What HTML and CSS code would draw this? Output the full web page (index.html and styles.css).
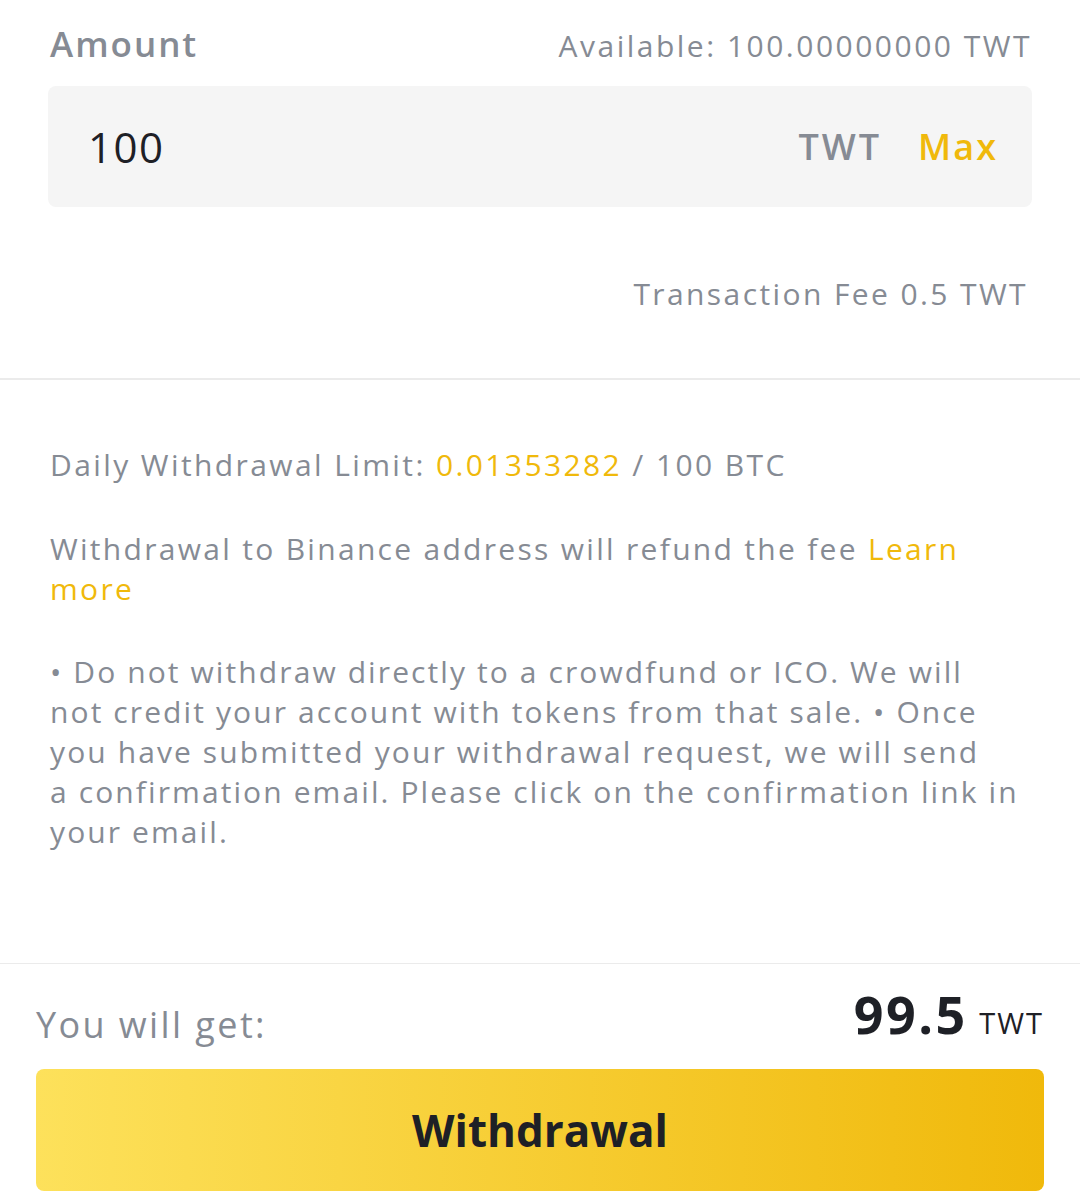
FILE: index.html
```html
<!DOCTYPE html>
<html lang="en">
<head>
    <meta charset="UTF-8">
    <meta name="viewport" content="width=device-width, initial-scale=1.0">
    <title>Withdraw TWT</title>
    <link rel="stylesheet" href="styles.css">
</head>
<body>
    <div class="form">
        <div class="amount-head">
            <span class="label">Amount</span>
            <span class="available">Available: 100.00000000 TWT</span>
        </div>
        <div class="amount-box">
            <span class="value">100</span>
            <span class="unit">TWT</span>
            <span class="max">Max</span>
        </div>
        <div class="fee">Transaction Fee <span class="num">0.5 TWT</span></div>
    </div>
    <div class="notes">
        <p class="limit">Daily Withdrawal Limit: <span class="gold">0.01353282</span> / 100 BTC</p>
        <p class="refund">Withdrawal to Binance address will refund the fee <span class="gold">Learn</span> <span class="gold">more</span></p>
        <p class="warn">• Do not withdraw directly to a crowdfund or ICO. We will<br>
            not credit your account with tokens from that sale. • Once<br>
            you have submitted your withdrawal request, we will send<br>
            a confirmation email. Please click on the confirmation link in<br>
            your email.</p>
    </div>
    <div class="footer">
        <div class="receive">
            <span class="receive-label">You will get:</span>
            <span class="receive-value"><b>99.5</b> TWT</span>
        </div>
        <button class="submit">Withdrawal</button>
    </div>
</body>
</html>
```

FILE: styles.css
```css
body {
    margin: 0;
    font-family: "Open Sans", sans-serif;
    color: #868b94;
    background: #fff;
}
.form {
    padding: 20px 48px 0 48px;
    height: 358px;
    border-bottom: 2px solid #ebebeb;
}
.amount-head {
    display: flex;
    justify-content: space-between;
    align-items: baseline;
    padding: 0 2px;
    height: 46px;
}
.label {
    font-size: 35px;
    font-weight: 600;
    letter-spacing: 2px;
}
.available {
    font-size: 30px;
    letter-spacing: 2.5px;
    margin-right: -2px;
}
.amount-box {
    margin-top: 20px;
    height: 121px;
    background: #f5f5f5;
    border-radius: 8px;
    display: flex;
    align-items: center;
    padding: 0 34px 0 40px;
}
.value {
    flex: 1;
    font-size: 42px;
    letter-spacing: 1.5px;
    color: #1e2026;
}
.unit {
    font-size: 36px;
    font-weight: 600;
    letter-spacing: 3px;
    margin-right: 36px;
}
.max {
    font-size: 36px;
    font-weight: 600;
    letter-spacing: 2px;
    color: #f0b90b;
}
.fee {
    margin-top: 66px;
    text-align: right;
    font-size: 30px;
    letter-spacing: 2.4px;
    padding-right: 4px;
}
.notes {
    padding: 65px 30px 0 50px;
    height: 584px;
    border-bottom: 1px solid #ebebeb;
    box-sizing: border-box;
}
.notes p {
    margin: 0;
    font-size: 30px;
    line-height: 40px;
    letter-spacing: 2.4px;
}
.refund {
    margin-top: 44px !important;
    padding-right: 20px;
    letter-spacing: 2.3px !important;
}
.warn {
    margin-top: 43px !important;
    letter-spacing: 2.1px !important;
}
.gold {
    color: #f0b90b;
}
.footer {
    padding: 24px 36px 0 36px;
}
.receive {
    display: flex;
    justify-content: space-between;
    align-items: flex-end;
}
.receive-label {
    font-size: 36px;
    line-height: 36px;
    letter-spacing: 2.4px;
}
.receive-value {
    font-size: 29px;
    line-height: 1;
    letter-spacing: 2px;
    margin-bottom: 3px;
    color: #1e2026;
}
.receive-value b {
    font-size: 52px;
    font-weight: 700;
    letter-spacing: 2.5px;
    margin-right: 2px;
}
.submit {
    margin-top: 26px;
    width: 100%;
    height: 122px;
    border: none;
    border-radius: 8px;
    background: linear-gradient(90deg, #fde15b, #f0b90b);
    font-family: inherit;
    font-size: 44px;
    font-weight: 700;
    color: #1e2026;
}
```
